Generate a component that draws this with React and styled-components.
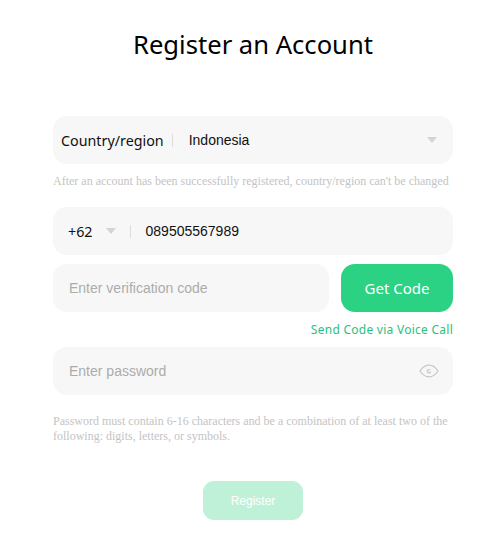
import React from 'react';
import styled, { createGlobalStyle } from 'styled-components';

const GlobalStyle = createGlobalStyle`
  html, body {
    margin: 0;
    padding: 0;
    background: #ffffff;
  }
  body {
    font-family: "Noto Sans", "Liberation Sans", sans-serif;
  }
`;

const Page = styled.div`
  width: 400px;
  height: 554px;
  margin: 0 0 0 53px;
  display: flex;
  flex-direction: column;
  box-sizing: border-box;
  padding-top: 27px;
`;

const Title = styled.h1`
  margin: 0 0 53px;
  height: 36px;
  line-height: 36px;
  text-align: center;
  font-size: 25.6px;
  font-weight: 400;
  color: #000000;
`;

const Field = styled.div`
  display: flex;
  align-items: center;
  box-sizing: border-box;
  flex: ${(p) => (p.$grow ? 1 : 'none')};
  height: 48px;
  padding: 0 ${(p) => p.$right || 15}px 0 ${(p) => p.$left || 15}px;
  background: #f7f7f7;
  border-radius: 14px;
`;

const Label = styled.span`
  font-size: 14.3px;
  color: #111111;
  white-space: nowrap;
`;

const Divider = styled.span`
  width: 1px;
  height: 13px;
  background: #dddddd;
  margin: 0 ${(p) => p.$after}px 0 ${(p) => p.$before}px;
`;

const Value = styled.span`
  flex: 1;
  font-family: "Liberation Sans", Arial, sans-serif;
  font-size: 14px;
  color: #111111;
`;

const Placeholder = styled.span`
  flex: 1;
  font-family: "Liberation Sans", Arial, sans-serif;
  font-size: 14px;
  color: #acacac;
`;

const Note = styled.p`
  margin: ${(p) => p.$top}px 0 ${(p) => p.$bottom}px;
  font-family: "Liberation Serif", "Times New Roman", serif;
  font-size: 12px;
  line-height: 15px;
  color: #c4c4c4;
`;

const Caret = styled.span`
  width: 0;
  height: 0;
  margin: ${(p) => p.$margin};
  border-left: 5px solid transparent;
  border-right: 5px solid transparent;
  border-top: 6px solid #d4d4d4;
`;

const CodeRow = styled.div`
  display: flex;
  gap: 12px;
  margin-top: 9px;
`;

const CodeButton = styled.button`
  width: 112px;
  height: 48px;
  padding: 0;
  border: 0;
  border-radius: 14px;
  background: #2bd283;
  color: #ffffff;
  font-family: "Noto Sans", "Liberation Sans", sans-serif;
  font-size: 15px;
`;

const VoiceLink = styled.a`
  align-self: flex-end;
  margin-top: 10px;
  margin-bottom: 9px;
  height: 16px;
  line-height: 16px;
  font-size: 12px;
  letter-spacing: 0.26px;
  color: #2bc17c;
`;

const RegisterButton = styled.button`
  align-self: center;
  width: 100px;
  height: 39px;
  margin-top: 37px;
  padding: 0;
  border: 0;
  border-radius: 11px;
  background: #bff1d9;
  color: #ffffff;
  font-family: "Liberation Sans", Arial, sans-serif;
  font-size: 12px;
`;

const EyeIcon = () => (
  <svg width="20" height="14" viewBox="0 0 20 14" fill="none" stroke="#c6c6c6" strokeWidth="1.2">
    <path d="M1 7 C4 2.4 7 1.2 10 1.2 C13 1.2 16 2.4 19 7 C16 11.6 13 12.8 10 12.8 C7 12.8 4 11.6 1 7 Z" />
    <path d="M11.2 6 A1.7 1.7 0 1 0 11.7 7.4" />
  </svg>
);

export default function App() {
  return (
    <>
      <GlobalStyle />
      <Page>
        <Title>Register an Account</Title>
        <Field $left={8} $right={16}>
          <Label>Country/region</Label>
          <Divider $before={8} $after={16} />
          <Value>Indonesia</Value>
          <Caret />
        </Field>
        <Note $top={10} $bottom={18}>
          After an account has been successfully registered, country/region can't be changed
        </Note>
        <Field>
          <Label>+62</Label>
          <Caret $margin="0 14px 0 13px" />
          <Divider $before={0} $after={15} />
          <Value>089505567989</Value>
        </Field>
        <CodeRow>
          <Field $grow $left={16}>
            <Placeholder>Enter verification code</Placeholder>
          </Field>
          <CodeButton>Get Code</CodeButton>
        </CodeRow>
        <VoiceLink>Send Code via Voice Call</VoiceLink>
        <Field $left={16} $right={14}>
          <Placeholder>Enter password</Placeholder>
          <EyeIcon />
        </Field>
        <Note $top={19} $bottom={0}>
          Password must contain 6-16 characters and be a combination of at least two of the
          following: digits, letters, or symbols.
        </Note>
        <RegisterButton>Register</RegisterButton>
      </Page>
    </>
  );
}
